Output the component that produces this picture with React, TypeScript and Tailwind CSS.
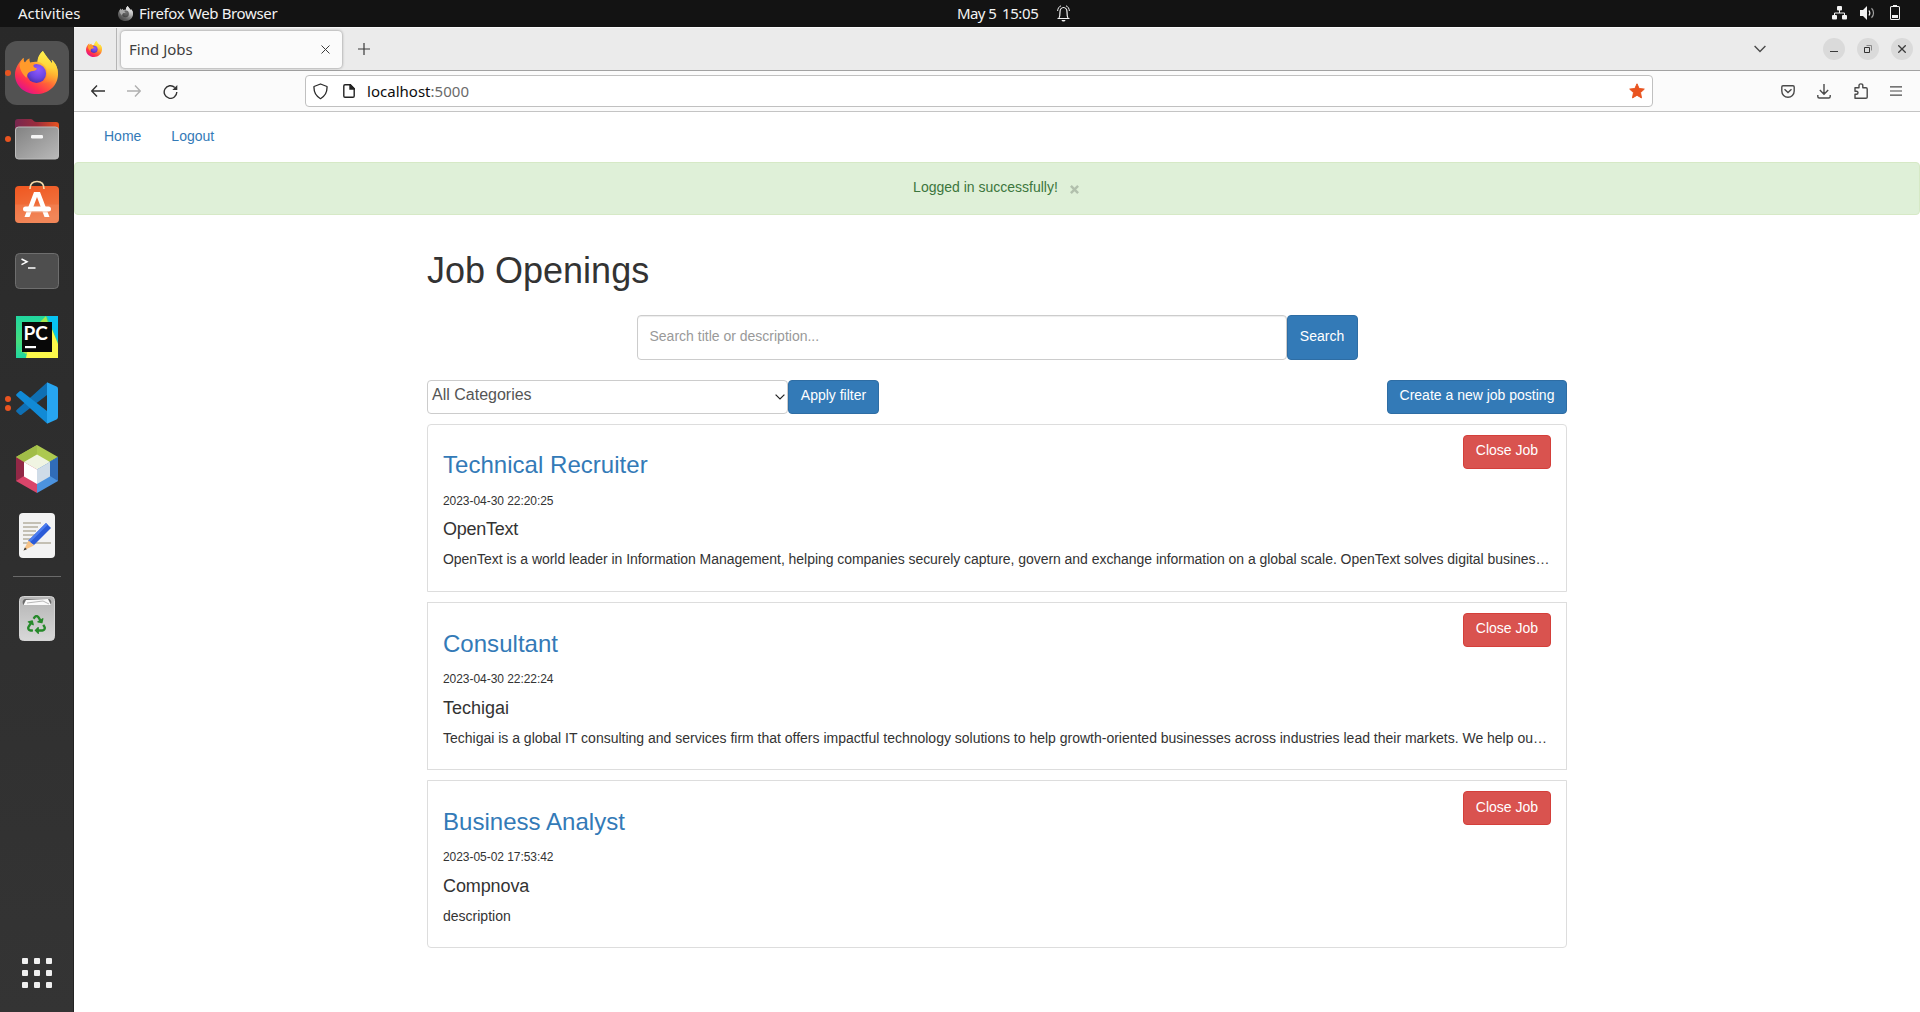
import type { ReactNode } from "react";
import { FaRecycle } from "react-icons/fa";

/* ---------- Shared artwork ---------- */

function FirefoxLogo({ size, id, mono = false }: { size: number; id: string; mono?: boolean }) {
  const body = `${id}-body`;
  const tail = `${id}-tail`;
  const globe = `${id}-globe`;
  return (
    <svg width={size} height={size} viewBox="0 0 44 44" className={mono ? "grayscale" : ""}>
      <defs>
        <linearGradient id={body} x1="0.85" y1="0.1" x2="0.25" y2="0.95">
          <stop offset="0" stopColor="#fff44f" />
          <stop offset="0.3" stopColor="#ffb932" />
          <stop offset="0.55" stopColor="#ff6a36" />
          <stop offset="0.8" stopColor="#ff2f50" />
          <stop offset="1" stopColor="#e31587" />
        </linearGradient>
        <linearGradient id={tail} x1="0.6" y1="0" x2="0.5" y2="1">
          <stop offset="0" stopColor="#fff44f" />
          <stop offset="0.5" stopColor="#ffd43a" />
          <stop offset="1" stopColor="#ff8a24" stopOpacity="0.2" />
        </linearGradient>
        <radialGradient id={globe} cx="0.6" cy="0.3" r="0.75">
          <stop offset="0" stopColor="#9059ff" />
          <stop offset="0.6" stopColor="#6b45e0" />
          <stop offset="1" stopColor="#4b2fa8" />
        </radialGradient>
      </defs>
      <path
        fill={`url(#${body})`}
        d="M28.500 0c-2.800 2.500-5.300 6-5.500 11-2.500-.2-5 0-7.300 1.100-.9-.9-1.300-2.500-1-4.300-1.900 1-3.400 2.500-4.500 4.200C9 11 8.500 9 8.800 7 4 11.500 0 17.500 0 24c0 11.500 9.500 20 22 20s22-8.700 22-20.500c0-6-2.500-11.500-6.500-14.500.3 1.300.6 2.600.5 3.700C35.500 9.500 31 4.500 28.500 0z"
      />
      <path
        fill={`url(#${tail})`}
        d="M28.500 0c-2.800 2.500-5.300 6-5.500 11 5.500 1 10 5.500 10 11.500 0 5-3 8.500-6.500 10.500C36 33 43 27.500 44 23.500c0-6-2.500-11.500-6.500-14.500.3 1.300.6 2.600.5 3.700C35.500 9.500 31 4.500 28.500 0z"
      />
      <circle cx="22" cy="23" r="9.800" fill={`url(#${globe})`} />
      <path
        fill="#ff9a2b"
        d="M8.800 7c-.3 2 .2 4 1.400 5 1.100-1.700 2.600-3.200 4.500-4.200-.3 1.800.1 3.400 1 4.300 1.800-.7 3.500-.5 4.300 1-1.200 1-1.500 2.200-.5 3.500l3 1.200c-.5 1.700-2 2.400-4 2.700-2.500.4-5 1-5.800 3.500-.4 1.500-.9 2.500-1 3.500C8 24 4.500 19 4.800 13.500c1-2.700 2.500-4.900 4-6.500z"
      />
    </svg>
  );
}

/* ---------- GNOME top bar ---------- */

function TopBar() {
  return (
    <header className="grid h-[27px] shrink-0 grid-cols-3 items-center bg-[#131313] font-[Noto_Sans,Open_Sans,sans-serif] text-[15px] leading-[24px] text-[#f2f2f2]">
      <div className="flex items-center pl-[18px]">
        <span className="-mt-[1px] w-[100px]">Activities</span>
        <FirefoxLogo size={15} id="bar" mono />
        <span className="-mt-[1px] ml-[6px] tracking-[-0.36px]">Firefox Web Browser</span>
      </div>
      <div className="flex items-center pl-[317px]">
        <span className="-mt-[1px] w-[45px] tracking-[-0.6px]">May 5</span>
        <span className="-mt-[1px] w-[54px] tracking-[-0.4px]">15:05</span>
        <svg width="13" height="17" viewBox="0 0 13 17" fill="none" stroke="#f2f2f2" className="ml-px">
          <path d="M.5 13.500h12M2 13c1-1.500 1-3 1-6 0-2.500 1.500-4.500 3.500-4.500S10 4.500 10 7c0 3 0 4.500 1 6" strokeWidth="1.200" />
          <path d="M.6 6C.8 3.500 2 1.500 4 .8M12.400 6C12.200 3.500 11 1.500 9 .8" strokeWidth="1" />
          <path d="M4.500 15h4c-.5 2-3.500 2-4 0z" fill="#f2f2f2" stroke="none" />
        </svg>
      </div>
      <div className="flex items-center justify-end gap-[14px] pr-5">
        <svg width="15" height="14" viewBox="0 0 15 14" fill="#f2f2f2" className="-mt-px mr-[-1px]">
          <rect x="5" y="0" width="5" height="4.500" rx="1" />
          <rect x="0" y="9" width="5" height="4.500" rx="1" />
          <rect x="10" y="9" width="5" height="4.500" rx="1" />
          <path d="M2.500 10V7h10v3M7.500 4v3" fill="none" stroke="#f2f2f2" />
        </svg>
        <svg width="15" height="14" viewBox="0 0 15 14" fill="#f2f2f2" className="-mt-px mr-[-1px]">
          <path d="M0 4h3l4-4v14L3 10H0z" />
          <path d="M9 4.500c1 1.500 1 3.500 0 5" fill="none" stroke="#f2f2f2" strokeWidth="1.200" />
          <path d="M11.500 2.200c2.700 2.500 2.700 7 0 9.600" fill="none" stroke="#a0a0a0" strokeWidth="1.200" />
        </svg>
        <svg width="10" height="15" viewBox="0 0 10 15" className="-mt-[2px] ml-[2px]">
          <path d="M3 0h4v1h1.500A1.500 1.500 0 0 1 10 2.500v11A1.500 1.500 0 0 1 8.500 15h-7A1.500 1.500 0 0 1 0 13.500v-11A1.500 1.500 0 0 1 1.500 1H3zM1 2.500v11c0 .3.200.5.500.5h7c.3 0 .5-.2.500-.5v-11c0-.3-.2-.5-.5-.5h-7c-.3 0-.5.200-.5.500z" fill="#f2f2f2" fillRule="evenodd" />
          <rect x="2" y="10" width="6" height="3" fill="#f2f2f2" />
        </svg>
      </div>
    </header>
  );
}

/* ---------- Dock ---------- */

function FilesIcon() {
  return (
    <svg width="44" height="42" viewBox="0 0 44 42">
      <defs>
        <linearGradient id="files-back" x1="0" x2="1">
          <stop offset="0" stopColor="#77274f" />
          <stop offset="0.5" stopColor="#9c2c3c" />
          <stop offset="1" stopColor="#e95420" />
        </linearGradient>
        <linearGradient id="files-front" x1="0" y1="0" x2="1" y2="1">
          <stop offset="0" stopColor="#828282" />
          <stop offset="1" stopColor="#b9b9b9" />
        </linearGradient>
      </defs>
      <path d="M0 4a3 3 0 0 1 3-3h13c2 0 2.500 3 5 3h20a3 3 0 0 1 3 3v10H0z" fill="url(#files-back)" />
      <rect x="0.500" y="9" width="43" height="32" rx="3" fill="url(#files-front)" stroke="#bcbcbc" />
      <rect x="16" y="17" width="12" height="3.500" rx="1.200" fill="#f5f5f5" />
    </svg>
  );
}

function SoftwareIcon() {
  return (
    <svg width="44" height="44" viewBox="0 0 44 44">
      <defs>
        <linearGradient id="bag" x1="0" y1="0" x2="0.300" y2="1">
          <stop offset="0" stopColor="#f0561f" />
          <stop offset="1" stopColor="#f07c4a" />
        </linearGradient>
      </defs>
      <path d="M0 10a4 4 0 0 1 4-4h36a4 4 0 0 1 4 4v29a4 4 0 0 1-4 4H4a4 4 0 0 1-4-4z" fill="url(#bag)" />
      <path d="M0 24.500h44V39a4 4 0 0 1-4 4H4a4 4 0 0 1-4-4z" fill="#fff" fillOpacity="0.080" />
      <path d="M15 9C15 3.500 18 1.500 22 1.500S29 3.500 29 9" fill="none" stroke="#f3d9a9" strokeWidth="1.700" />
      <path d="M19 12h6L34.500 37h-5L22 17 14.500 37h-5z" fill="#fff" />
      <rect x="8" y="26.500" width="28" height="5" rx="2.500" fill="#fff" />
      <path d="M11 31.900h22" stroke="#f0b598" strokeWidth="0.800" />
    </svg>
  );
}

function TerminalIcon() {
  return (
    <svg width="44" height="36" viewBox="0 0 44 36">
      <rect x="0.500" y="0.500" width="43" height="35" rx="4" fill="#4e4e4e" stroke="#6e6e6e" />
      <path d="M6.500 6l5.500 2.800-5.500 2.800" fill="none" stroke="#fff" strokeWidth="1.500" />
      <path d="M13 15h7.500" stroke="#fff" strokeWidth="1.500" />
    </svg>
  );
}

function PyCharmIcon() {
  return (
    <div className="relative size-[42px]">
      <svg width="42" height="42" viewBox="0 0 42 42">
        <defs>
          <linearGradient id="pc-green" x1="0" y1="0" x2="0" y2="1">
            <stop offset="0" stopColor="#21d7a0" />
            <stop offset="0.600" stopColor="#45dd7e" />
            <stop offset="1" stopColor="#21d7a0" />
          </linearGradient>
        </defs>
        <path d="M0 0h42v42H0z" fill="url(#pc-green)" />
        <path d="M24 6L30 0l3 10L20 34 10 38l-5-3z" fill="#a6e84e" />
        <path d="M33 6l9 22v14H10l2-10z" fill="#fcf84a" />
        <path d="M31 0h11v26z" fill="#07c3f2" />
        <path d="M6 6h30v30H6z" fill="#080808" />
        <path d="M9 30h11v2.200H9z" fill="#fff" />
      </svg>
      <span className="absolute left-[8px] top-[7px] font-[Lato,sans-serif] text-[19px] font-bold leading-[20px] text-white">PC</span>
    </div>
  );
}

function VsCodeIcon() {
  return (
    <svg width="42" height="42" viewBox="0 0 42 42">
      <path d="M31 0.500 0.600 28a1.500 1.500 0 0 0 0 2l3 2.700c.6.500 1.300.5 1.900 0L31 13z" fill="#0f6fb3" />
      <path d="M31 41.500.6 14a1.500 1.500 0 0 1 0-2l3-2.700c.6-.5 1.300-.5 1.900 0L31 29z" fill="#118ad6" />
      <path d="M31 .3l9.500 4.300A2.500 2.500 0 0 1 42 7v28a2.500 2.500 0 0 1-1.500 2.400L31 41.700z" fill="#27a5f0" />
    </svg>
  );
}

function NetBeansIcon() {
  return (
    <svg width="42" height="48" viewBox="0 0 42 48">
      <path d="M21 0l21 12-21 12L0 12z" fill="#adc94f" />
      <path d="M0 12l21 12v24L0 36z" fill="#d9456a" />
      <path d="M0 12l8 5v14L0 36z" fill="#922846" />
      <path d="M42 12L21 24v24l21-12z" fill="#4c93df" />
      <path d="M42 12l-8 5v14l8 5z" fill="#306cb8" />
      <path d="M21 0v10L8 17l-8-5z" fill="#a1bd48" />
      <path d="M21 9.500L34 17l-13 7.500L8 17z" fill="#f0f4e2" />
      <path d="M8 17l13 7.500V39L8 31.500z" fill="#fff" />
      <path d="M34 17l-13 7.500V39l13-7.500z" fill="#cfdce8" />
    </svg>
  );
}

function TextEditorIcon() {
  return (
    <svg width="36" height="45" viewBox="0 0 36 45">
      <rect width="36" height="45" rx="4" fill="#f3f3f3" />
      <path d="M4 10h18M4 14h15M4 18h13M4 22h12M4 26h10M4 30h28" stroke="#c4c0b4" strokeWidth="2" />
      <path d="M9 28L27 10l5 5-17 17z" fill="#2b5bd7" />
      <path d="M9 28L27 10l1.700 1.700L10.700 29.700z" fill="#4c7df0" />
      <path d="M4.500 37.500L9.500 27.500l5.500 5z" fill="#f6c286" />
      <path d="M4.500 37.500l1.400-3 2 1.800z" fill="#333" />
    </svg>
  );
}

function TrashIcon() {
  return (
    <div className="relative h-[45px] w-[36px]">
      <svg width="36" height="45" viewBox="0 0 36 45">
        <defs>
          <linearGradient id="trash" x1="0" y1="0" x2="0" y2="1">
            <stop offset="0" stopColor="#b4b4b4" />
            <stop offset="1" stopColor="#d8d8d8" />
          </linearGradient>
        </defs>
        <rect x="0.500" y="0.500" width="35" height="44" rx="4" fill="url(#trash)" stroke="#d4d4d4" />
        <path d="M4 8c-1-3 .5-5 3-5h22c2.500 0 4 2 3 5v1H4z" fill="#6b6b6b" />
        <path d="M4.500 9L7 4l22-1 3 6z" fill="#fafafa" />
        <path d="M8 7l16-2 6 3" fill="none" stroke="#9a9a9a" strokeWidth="0.700" />
      </svg>
      <FaRecycle size={19} color="#26892a" className="absolute top-[19px] left-[8px]" />
    </div>
  );
}

function DockItem({ children, dots = 0, active = false }: { children: ReactNode; dots?: number; active?: boolean }) {
  return (
    <div className={`relative mb-[2px] flex h-16 w-16 items-center justify-center rounded-[12px] ${active ? "bg-[#525252]" : ""}`}>
      {dots > 0 && (
        <div className="absolute inset-y-0 left-0 flex flex-col justify-center gap-[3px]">
          {Array.from({ length: dots }, (_, i) => (
            <span key={i} className="size-[6px] rounded-full bg-[#e95420]" />
          ))}
        </div>
      )}
      {children}
    </div>
  );
}

function Dock() {
  return (
    <aside className="flex w-[74px] shrink-0 flex-col items-center border-r border-[#232323] bg-linear-to-b from-[#292929] to-[#343434] pt-[14px]">
      <DockItem dots={1} active>
        <div className="-translate-y-px"><FirefoxLogo size={43} id="dock" /></div>
      </DockItem>
      <DockItem dots={1}><FilesIcon /></DockItem>
      <DockItem><div className="-translate-y-[3px]"><SoftwareIcon /></div></DockItem>
      <DockItem><TerminalIcon /></DockItem>
      <DockItem><PyCharmIcon /></DockItem>
      <DockItem dots={2}><VsCodeIcon /></DockItem>
      <DockItem><NetBeansIcon /></DockItem>
      <DockItem><TextEditorIcon /></DockItem>
      <div className="mt-[7px] mb-[9px] h-px w-12 bg-[#6a6a6a]" />
      <DockItem><TrashIcon /></DockItem>
      <div className="mt-auto mb-6 grid grid-cols-3 gap-[6px]">
        {Array.from({ length: 9 }, (_, i) => (
          <span key={i} className="size-[6px] rounded-[1px] bg-[#f0f0f0]" />
        ))}
      </div>
    </aside>
  );
}

/* ---------- Browser chrome ---------- */

function TabStrip() {
  return (
    <div className="flex h-11 shrink-0 items-center border-t border-b border-t-[#f8f8f8] border-b-[#a2a2a2] bg-[#ebebeb] font-[Noto_Sans,Open_Sans,sans-serif]">
      <div className="flex h-full w-[43px] items-center justify-center border-r border-[#b5b5b5] pr-[2px]">
        <FirefoxLogo size={16} id="fav" />
      </div>
      <div className="ml-1 flex h-[37px] w-[221px] items-center justify-between rounded-[4px] bg-[#fbfbfb] pr-3 pl-2 shadow-[0_0_3px_rgba(0,0,0,0.45)]">
        <span className="text-[15px] leading-5 tracking-[0.02px] text-[#404040]">Find Jobs</span>
        <svg width="9" height="9" viewBox="0 0 9 9" stroke="#3c3c3c" strokeWidth="1">
          <path d="M.5.5l8 8M8.500.5l-8 8" />
        </svg>
      </div>
      <svg width="12" height="12" viewBox="0 0 12 12" className="ml-4" stroke="#3a3a3a" strokeWidth="1.200">
        <path d="M6 0v12M0 6h12" />
      </svg>
      <div className="ml-auto flex items-center pr-[7px]">
        <svg width="12" height="8" viewBox="0 0 12 8" className="mr-[57px]" fill="none" stroke="#4a4a4a" strokeWidth="1.400">
          <path d="M.6 1L6 6.400 11.400 1" />
        </svg>
        <div className="flex gap-3">
          <span className="flex size-[22px] items-center justify-center rounded-full bg-[#dadada]">
            <svg width="8" height="8" viewBox="0 0 8 8" stroke="#3a3a3a"><path d="M0 6.500h8" /></svg>
          </span>
          <span className="flex size-[22px] items-center justify-center rounded-full bg-[#dadada]">
            <svg width="8" height="8" viewBox="0 0 8 8" fill="none">
              <path d="M2.500.5h5v5" stroke="#8a8a8a" />
              <path d="M.5 2.500h5v5H.5z" stroke="#333" />
            </svg>
          </span>
          <span className="flex size-[22px] items-center justify-center rounded-full bg-[#dadada]">
            <svg width="8" height="8" viewBox="0 0 8 8" stroke="#3a3a3a" strokeWidth="1.300"><path d="M.3.3l7.400 7.400M7.700.3L.3 7.700" /></svg>
          </span>
        </div>
      </div>
    </div>
  );
}

function Toolbar() {
  return (
    <div className="flex h-[41px] shrink-0 items-center border-b border-[#c4c4c4] bg-[#fbfbfb] pl-[17px] font-[Noto_Sans,Open_Sans,sans-serif]">
      <svg width="14" height="12" viewBox="0 0 14 12" fill="none" stroke="#333" strokeWidth="1.400" className="mr-[22px]">
        <path d="M14 6H1M6 .6L.8 6 6 11.400" />
      </svg>
      <svg width="14" height="12" viewBox="0 0 14 12" fill="none" stroke="#b0b0b0" strokeWidth="1.400" className="mr-[22px]">
        <path d="M0 6h13M8 .6L13.200 6 8 11.400" />
      </svg>
      <svg width="15" height="15" viewBox="0 0 15 15" fill="none" stroke="#333" strokeWidth="1.400">
        <path d="M13.800 8a6.300 6.300 0 1 1-2-4.600" />
        <path d="M14.300 1v5H9.300z" fill="#333" stroke="none" />
      </svg>
      <div className="ml-[127px] flex h-8 w-[1348px] items-center rounded-[4px] border border-[#c0c0c0] bg-white pr-[7px] pl-[7px]">
        <svg width="15" height="17" viewBox="0 0 15 17" fill="none" stroke="#2a2a2a" strokeWidth="1.300">
          <path d="M7.500 1L14 3.500c.3 5-1.500 9.500-6.500 12.200C2.500 13 .7 8.500 1 3.500z" strokeLinejoin="round" />
        </svg>
        <svg width="12" height="14" viewBox="0 0 12 14" fill="none" stroke="#222" strokeWidth="1.400" className="ml-[15px]">
          <path d="M2 .8h5.200l4 4V12c0 .7-.4 1.200-1.200 1.200H2C1.200 13.200.8 12.700.8 12V2C.8 1.200 1.200.8 2 .8z" />
          <path d="M7 .5V5h4.500z" fill="#222" />
        </svg>
        <span className="ml-3 text-[15px] leading-5 tracking-[0.02px] text-[#6a6a6a]">
          <span className="text-[#0c0c0d]">localhost</span>:5000
        </span>
        <svg width="16" height="16" viewBox="0 0 16 16" fill="#e95420" className="ml-auto">
          <path d="M8 .8l2.100 4.700 5.200.6-3.800 3.500 1 5.300L8 12.300l-4.500 2.600 1-5.300L.7 6.100l5.200-.6z" stroke="#e95420" strokeLinejoin="round" />
        </svg>
      </div>
      <div className="ml-auto flex items-center pr-[18px]">
        <svg width="14" height="13" viewBox="0 0 14 13" fill="none" stroke="#4a4a4a" strokeWidth="1.400">
          <path d="M2 .8h10c.8 0 1.200.4 1.200 1.200v4C13.200 9.500 10.500 12.200 7 12.200S.8 9.500.8 6V2C.8 1.200 1.200.8 2 .8z" />
          <path d="M3.500 4.200L7 7.500l3.500-3.300" />
        </svg>
        <svg width="14" height="15" viewBox="0 0 14 15" fill="none" stroke="#4a4a4a" strokeWidth="1.400" className="ml-[22px]">
          <path d="M7 0v10M2.800 6L7 10.300 11.200 6M.8 11v1.500c0 1 .5 1.500 1.500 1.500h9.400c1 0 1.500-.5 1.500-1.500V11" />
        </svg>
        <svg width="14" height="16" viewBox="0 0 14 16" fill="none" stroke="#4a4a4a" strokeWidth="1.400" strokeLinejoin="round" className="ml-[23px]">
          <path d="M1 4.800h4V2.500C5 .3 8.800.3 8.800 2.500v2.300H12c.8 0 1.200.4 1.200 1.200v8.200c0 .7-.4 1-1.200 1H1v-4h1.500c2 0 2-3 0-3H1z" />
        </svg>
        <svg width="12" height="10" viewBox="0 0 12 10" stroke="#4a4a4a" strokeWidth="1.200" className="ml-[22px]">
          <path d="M0 .8h12M0 5h12M0 9.200h12" />
        </svg>
      </div>
    </div>
  );
}

/* ---------- Job board ---------- */

type Job = {
  title: string;
  posted: string;
  company: string;
  description: string;
  /** Vertical rhythm and tracking of the card's texts */
  titleGap: string;
  dateGap: string;
  companyStyle: string;
  descriptionStyle: string;
  buttonPad: string;
};

const jobs: Job[] = [
  {
    title: "Technical Recruiter",
    posted: "2023-04-30 22:20:25",
    company: "OpenText",
    description:
      "OpenText is a world leader in Information Management, helping companies securely capture, govern and exchange information on a global scale. OpenText solves digital busines…",
    titleGap: "pt-[27px]",
    dateGap: "mt-[15px]",
    companyStyle: "mt-[9px] tracking-[-0.25px]",
    descriptionStyle: "tracking-[-0.042px]",
    buttonPad: "pb-[5px]",
  },
  {
    title: "Consultant",
    posted: "2023-04-30 22:22:24",
    company: "Techigai",
    description:
      "Techigai is a global IT consulting and services firm that offers impactful technology solutions to help growth-oriented businesses across industries lead their markets. We help ou…",
    titleGap: "pt-[28px]",
    dateGap: "mt-[14px]",
    companyStyle: "mt-[10px]",
    descriptionStyle: "tracking-[-0.006px]",
    buttonPad: "pb-[5px]",
  },
  {
    title: "Business Analyst",
    posted: "2023-05-02 17:53:42",
    company: "Compnova",
    description: "description",
    titleGap: "pt-[28px]",
    dateGap: "mt-[14px]",
    companyStyle: "mt-[10px] tracking-[-0.1px]",
    descriptionStyle: "tracking-normal",
    buttonPad: "pb-[3px]",
  },
];

function JobCard({ job }: { job: Job }) {
  return (
    <li className="flex h-[168px] items-start justify-between border border-[#ddd] px-[15px] first:rounded-t-[4px] last:rounded-b-[4px]">
      <div className={`w-0 grow whitespace-nowrap ${job.titleGap}`}>
        <h3 className="text-[24px] leading-[26px] tracking-[0.03px] text-[#337ab7]">{job.title}</h3>
        <p className={`text-[12px] leading-[17px] tracking-[-0.05px] ${job.dateGap}`}>{job.posted}</p>
        <h4 className={`text-[18px] leading-5 ${job.companyStyle}`}>{job.company}</h4>
        <p className={`mt-[10px] text-[14px] leading-5 ${job.descriptionStyle}`}>{job.description}</p>
      </div>
      <button
        className={`mt-[10px] h-[34px] w-[88px] rounded-[4px] border border-[#d43f3a] bg-[#d9534f] text-[14px] leading-5 text-white ${job.buttonPad}`}
      >
        Close Job
      </button>
    </li>
  );
}

function JobBoard() {
  return (
    <main className="grow bg-white font-[Liberation_Sans,Arial,sans-serif] text-[14px] leading-5 text-[#333]">
      <nav className="flex h-[50px] gap-[30px] pt-[14px] pl-[30px] text-[#337ab7]">
        <a>Home</a>
        <a>Logout</a>
      </nav>
      <div className="flex h-[53px] justify-center rounded-[4px] border border-[#d6e9c6] bg-[#dff0d8] pt-[14px] text-[#3c763d]">
        <span>Logged in successfully!</span>
        <svg width="9" height="9" viewBox="0 0 9 9" className="mt-[8px] mr-[2px] ml-[12px]" stroke="#b2c0ad" strokeWidth="2.500">
          <path d="M.9.900l7.200 7.200M8.100.900L.9 8.100" />
        </svg>
      </div>
      <div className="mx-auto w-[1140px] pt-9">
        <h1 className="text-[36px] leading-10">Job Openings</h1>
        <form className="mt-6 flex justify-center">
          <div className="h-[45px] w-[650px] rounded-[4px] border border-[#ccc] px-3 pt-[10px] text-[#999] shadow-[inset_0_1px_1px_rgba(0,0,0,0.075)]">
            Search title or description...
          </div>
          <button type="button" className="h-[45px] w-[71px] rounded-[4px] border border-[#2e6da4] bg-[#337ab7] pb-[4px] text-white">
            Search
          </button>
        </form>
        <div className="mt-5 flex h-[34px]">
          <div className="flex w-[361px] items-center justify-between rounded-[4px] border border-[#ccc] pr-[2px] pl-1 text-[16px] text-[#555]">
            <span className="-mt-[4px]">All Categories</span>
            <svg width="10" height="6" viewBox="0 0 10 6" fill="none" stroke="#222" strokeWidth="1.200">
              <path d="M.6.600L5 5 9.400.600" />
            </svg>
          </div>
          <button className="w-[91px] rounded-[4px] border border-[#2e6da4] bg-[#337ab7] pb-[5px] text-white">Apply filter</button>
          <button className="ml-auto w-[180px] rounded-[4px] border border-[#2e6da4] bg-[#337ab7] pb-[5px] text-white">
            Create a new job posting
          </button>
        </div>
        <ul className="mt-[10px] flex flex-col gap-[10px]">
          {jobs.map((job) => (
            <JobCard key={job.title} job={job} />
          ))}
        </ul>
      </div>
    </main>
  );
}

export default function App() {
  return (
    <div className="flex h-[1012px] w-[1920px] flex-col overflow-hidden bg-white">
      <TopBar />
      <div className="flex min-h-0 grow">
        <Dock />
        <div className="flex min-w-0 grow flex-col">
          <TabStrip />
          <Toolbar />
          <JobBoard />
        </div>
      </div>
    </div>
  );
}
